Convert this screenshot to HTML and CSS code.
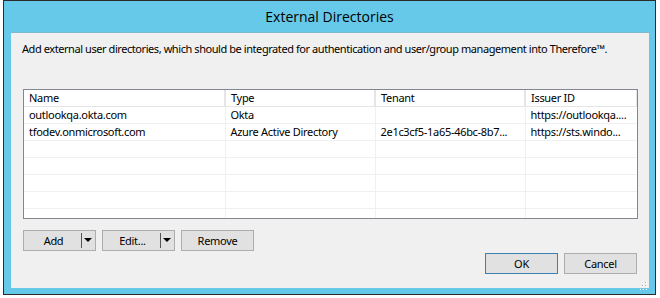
FILE: index.html
```html
<!DOCTYPE html>
<html lang="en">
<head>
  <meta charset="UTF-8">
  <title>External Directories</title>
  <link rel="stylesheet" href="styles.css">
</head>
<body>
  <div class="window">
    <div class="titlebar">External Directories</div>
    <div class="content">
      <p class="intro">Add external user directories, which should be integrated for authentication and user/group management into Therefore™.</p>

      <div class="listview">
        <table>
          <colgroup>
            <col class="col-name">
            <col class="col-type">
            <col class="col-tenant">
            <col class="col-issuer">
          </colgroup>
          <thead>
            <tr>
              <th>Name</th>
              <th>Type</th>
              <th>Tenant</th>
              <th>Issuer ID</th>
            </tr>
          </thead>
          <tbody>
            <tr>
              <td>outlookqa.okta.com</td>
              <td>Okta</td>
              <td></td>
              <td>https://outlookqa....</td>
            </tr>
            <tr>
              <td>tfodev.onmicrosoft.com</td>
              <td>Azure Active Directory</td>
              <td>2e1c3cf5-1a65-46bc-8b7...</td>
              <td>https://sts.windo...</td>
            </tr>
            <tr><td></td><td></td><td></td><td></td></tr>
            <tr><td></td><td></td><td></td><td></td></tr>
            <tr><td></td><td></td><td></td><td></td></tr>
            <tr><td></td><td></td><td></td><td></td></tr>
            <tr class="cut"><td></td><td></td><td></td><td></td></tr>
          </tbody>
        </table>
      </div>

      <div class="actions">
        <button class="btn split"><span class="label">Add</span><span class="arrow"></span></button>
        <button class="btn split"><span class="label">Edit...</span><span class="arrow"></span></button>
        <button class="btn">Remove</button>
      </div>

      <div class="footer">
        <button class="btn default">OK</button>
        <button class="btn">Cancel</button>
      </div>

      <div class="grip">
        <svg width="8" height="8" viewBox="0 0 8 8">
          <rect x="6" y="0" width="1" height="1" fill="#b5b5b5"/>
          <rect x="3" y="3" width="1" height="1" fill="#b5b5b5"/>
          <rect x="6" y="3" width="1" height="1" fill="#b5b5b5"/>
          <rect x="0" y="6" width="1" height="1" fill="#b5b5b5"/>
          <rect x="3" y="6" width="1" height="1" fill="#b5b5b5"/>
          <rect x="6" y="6" width="1" height="1" fill="#b5b5b5"/>
          <rect x="7" y="1" width="1" height="1" fill="#fff"/>
          <rect x="4" y="4" width="1" height="1" fill="#fff"/>
          <rect x="7" y="4" width="1" height="1" fill="#fff"/>
          <rect x="1" y="7" width="1" height="1" fill="#fff"/>
          <rect x="4" y="7" width="1" height="1" fill="#fff"/>
          <rect x="7" y="7" width="1" height="1" fill="#fff"/>
        </svg>
      </div>
    </div>
  </div>
</body>
</html>
```

FILE: styles.css
```css
body {
  margin: 0;
  background-color: #ffffff;
  font-family: 'Noto Sans', 'Liberation Sans', sans-serif;
  font-size: 11px;
  letter-spacing: -0.3px;
  color: #000;
}
.window {
  width: 651px;
  height: 293px;
  margin-left: 3px;
  border: 1px solid #2b2b2b;
  background-color: #66c9e9;
  display: flex;
  flex-direction: column;
}
.titlebar {
  height: 31px;
  line-height: 32px;
  text-align: center;
  font-family: 'Open Sans', sans-serif;
  font-size: 14px;
  letter-spacing: 0;
  color: #000;
}
.content {
  position: relative;
  flex: 1;
  margin: 0 6px 6px 7px;
  background-color: #f0f0f0;
  border-top: 1px solid #7fb9cf;
  padding: 0 11px 0 11px;
}
.intro {
  margin: 7px 0 0 0;
  line-height: 17px;
  letter-spacing: -0.43px;
  white-space: nowrap;
}
.listview {
  margin: 32px 0 0 1px;
  width: 613px;
  height: 128px;
  border: 1px solid #828790;
  background-color: #fff;
  overflow: hidden;
}
table {
  border-collapse: collapse;
  table-layout: fixed;
  width: 613px;
}
.col-name { width: 201px; }
.col-type { width: 150px; }
.col-tenant { width: 150px; }
.col-issuer { width: 112px; }
th {
  height: 16px;
  padding: 0 5px;
  font-weight: normal;
  text-align: left;
  border-right: 2px solid #e5e5e5;
  border-bottom: 1px solid #e5e5e5;
  line-height: 16px;
}
td {
  height: 16px;
  padding: 0 5px;
  line-height: 16px;
  border-right: 1px solid #f0f0f0;
  border-bottom: 1px solid #f0f0f0;
  white-space: nowrap;
  overflow: hidden;
}
.actions {
  display: flex;
  gap: 6px;
  margin: 11px 0 0 1px;
}
.btn {
  height: 21px;
  width: 73px;
  padding: 0;
  font-family: inherit;
  font-size: 11px;
  letter-spacing: inherit;
  color: #000;
  background-color: #e1e1e1;
  border: 1px solid #adadad;
}
.split {
  display: flex;
  align-items: stretch;
}
.split .label {
  flex: 1;
  line-height: 19px;
  text-align: center;
  padding-left: 2px;
}
.split .arrow {
  width: 13px;
  border-left: 1px solid #555;
  margin: 2px 0;
  position: relative;
}
.split .arrow::after {
  content: '';
  position: absolute;
  left: 2px;
  top: 5px;
  border-left: 4px solid transparent;
  border-right: 4px solid transparent;
  border-top: 4px solid #000;
}
.footer {
  display: flex;
  justify-content: flex-end;
  gap: 6px;
  margin: 2px 1px 0 0;
}
.footer .btn {
  height: 21px;
}
.default {
  border-color: #3c7fb1;
}
.grip {
  position: absolute;
  right: 2px;
  bottom: 2px;
  width: 8px;
  height: 8px;
}
```
